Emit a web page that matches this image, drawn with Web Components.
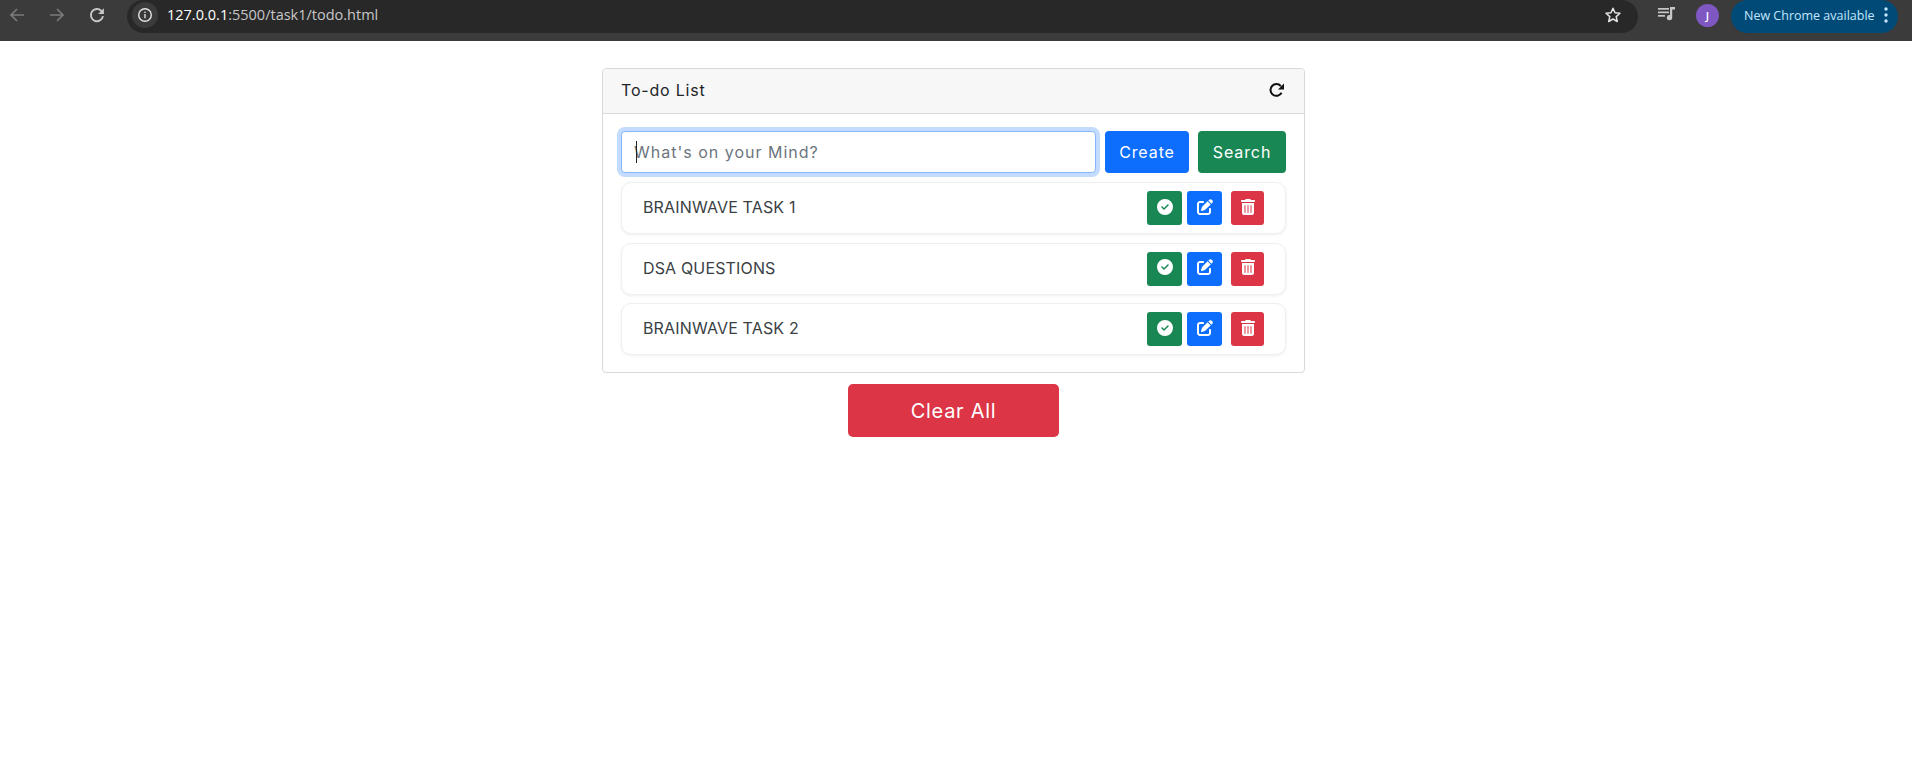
<!DOCTYPE html>
<html>
<head>
<meta charset="utf-8">
<title>To-do List</title>
<style>
  html, body { margin: 0; padding: 0; background: #fff; }
  body { font-family: Inter, "Liberation Sans", sans-serif; }
</style>
</head>
<body>
<browser-bar url-host="127.0.0.1" url-path=":5500/task1/todo.html"></browser-bar>
<todo-app>
  <todo-item>BRAINWAVE TASK 1</todo-item>
  <todo-item>DSA QUESTIONS</todo-item>
  <todo-item>BRAINWAVE TASK 2</todo-item>
</todo-app>

<script>
const ICONS = {
  check: '<svg viewBox="0 0 512 512" width="16" height="16"><path fill="currentColor" d="M256 512A256 256 0 1 0 256 0a256 256 0 1 0 0 512zM369 209L241 337c-9.4 9.4-24.6 9.4-33.9 0l-64-64c-9.4-9.4-9.4-24.6 0-33.9s24.6-9.4 33.9 0l47 47L335 175c9.4-9.4 24.6-9.4 33.9 0s9.4 24.6 0 33.9z"/></svg>',
  edit: '<svg viewBox="0 0 512 512" width="16" height="16"><path fill="currentColor" d="M471.6 21.7c-21.9-21.9-57.3-21.9-79.2 0L362.3 51.7l97.9 97.9 30.1-30.1c21.9-21.9 21.9-57.3 0-79.2L471.6 21.7zm-299.2 220c-6.1 6.1-10.8 13.6-13.5 21.9l-29.6 88.8c-2.9 8.6-.6 18.1 5.8 24.6s15.9 8.7 24.6 5.8l88.8-29.6c8.2-2.7 15.7-7.4 21.9-13.5L437.7 172.3 339.7 74.3 172.4 241.7zM96 64C43 64 0 107 0 160V416c0 53 43 96 96 96H352c53 0 96-43 96-96V320c0-17.7-14.3-32-32-32s-32 14.3-32 32v96c0 17.7-14.3 32-32 32H96c-17.7 0-32-14.3-32-32V160c0-17.7 14.3-32 32-32h96c17.7 0 32-14.3 32-32s-14.3-32-32-32H96z"/></svg>',
  trash: '<svg viewBox="0 0 448 512" width="14" height="16"><path fill="currentColor" d="M135.2 17.7C140.6 6.8 151.7 0 163.8 0H284.2c12.1 0 23.2 6.8 28.6 17.7L320 32h96c17.7 0 32 14.3 32 32s-14.3 32-32 32H32C14.3 96 0 81.7 0 64S14.3 32 32 32h96l7.2-14.3zM32 128H416V448c0 35.3-28.7 64-64 64H96c-35.3 0-64-28.7-64-64V128zm96 64c-8.8 0-16 7.2-16 16V432c0 8.8 7.2 16 16 16s16-7.2 16-16V208c0-8.8-7.2-16-16-16zm96 0c-8.8 0-16 7.2-16 16V432c0 8.8 7.2 16 16 16s16-7.2 16-16V208c0-8.8-7.2-16-16-16zm96 0c-8.8 0-16 7.2-16 16V432c0 8.8 7.2 16 16 16s16-7.2 16-16V208c0-8.8-7.2-16-16-16z"/></svg>',
  refresh: '<svg viewBox="0 0 16 16" width="16" height="16"><path d="M12.6 10.8A5.9 5.9 0 1 1 11.9 4.1" fill="none" stroke="currentColor" stroke-width="2"/><path d="M15 1.5V7.5H9z" fill="currentColor"/></svg>'
};

const barTemplate = document.createElement('template');
barTemplate.innerHTML = `
<style>
  :host {
    display: flex;
    align-items: flex-start;
    height: 41px;
    background: #3b3b3b;
    color: #c7c7c7;
    font-family: "Open Sans", "Noto Sans", sans-serif;
  }
  .nav { display: flex; width: 127px; height: 33px; box-sizing: border-box; padding-bottom: 4px; align-items: center; }
  .nav svg { display: block; margin-left: 8px; margin-right: 14px; }
  .nav .dim { color: #7b7b7b; }
  .url {
    flex: 1;
    height: 33px;
    box-sizing: border-box;
    background: #282828;
    border-radius: 17px;
    display: flex;
    align-items: center;
    padding: 0 16px 4px 5px;
    font-size: 14.5px;
  }
  .info {
    width: 26px; height: 26px; border-radius: 50%;
    background: #3b3b3b;
    display: flex; align-items: center; justify-content: center;
    margin-right: 9px;
  }
  .host { color: #fff; }
  .spacer { flex: 1; }
  .tools { display: flex; align-items: center; height: 33px; width: 274px; }
  .avatar {
    width: 23px; height: 23px; border-radius: 50%;
    background: #7e57c2; color: #fff;
    font-size: 11px; font-weight: 600;
    display: flex; align-items: center; justify-content: center;
    margin-left: 20px;
    margin-bottom: 3px;
  }
  .update {
    height: 33px; box-sizing: border-box; border-radius: 17px;
    background: #004a77; color: #c2e7ff;
    font-size: 12.5px;
    display: flex; align-items: center;
    padding: 0 10px 3px 13px;
    margin-left: 12px;
    white-space: nowrap;
  }
  .update svg { margin-left: 9px; }
</style>
<div class="nav">
  <svg class="dim" width="18" height="18" viewBox="0 0 18 18"><path d="M16 9H3M9 3L3 9l6 6" fill="none" stroke="currentColor" stroke-width="1.7"/></svg>
  <svg class="dim" width="18" height="18" viewBox="0 0 18 18"><path d="M2 9h13M9 3l6 6-6 6" fill="none" stroke="currentColor" stroke-width="1.7"/></svg>
  <svg width="18" height="18" viewBox="0 0 18 18"><path d="M15 10.2A6.1 6.1 0 1 1 13.2 4.7L14.6 6.2" fill="none" stroke="currentColor" stroke-width="1.9"/><path d="M15.9 2.2V8H10.1z" fill="currentColor"/></svg>
</div>
<div class="url">
  <span class="info"><svg width="16" height="16" viewBox="0 0 16 16"><circle cx="8" cy="8" r="6.3" fill="none" stroke="#e3e3e3" stroke-width="1.4"/><rect x="7.3" y="7" width="1.4" height="4.2" fill="#e3e3e3"/><rect x="7.3" y="4.6" width="1.4" height="1.4" fill="#e3e3e3"/></svg></span>
  <span><span class="host" id="host"></span><span id="path"></span></span>
  <span class="spacer"></span>
  <svg width="18" height="18" viewBox="0 0 18 18"><path d="M9 2.2l2 4.6 5 .5-3.8 3.3 1.1 4.9L9 13l-4.3 2.5 1.1-4.9L2 7.3l5-.5z" fill="none" stroke="#e3e3e3" stroke-width="1.5" stroke-linejoin="round"/></svg>
</div>
<div class="tools">
  <svg style="margin-left:20px;margin-bottom:5px" width="18" height="18" viewBox="0 0 18 18" fill="#c7c7c7"><rect x="0" y="3" width="11" height="1.7"/><rect x="0" y="6.5" width="11" height="1.7"/><rect x="0" y="10" width="7" height="1.7"/><path d="M12 2h5v2.4h-2.8v8.2a2.7 2.7 0 1 1-2.2-2.6z"/></svg>
  <span class="avatar">J</span>
  <span class="update">New Chrome available
    <svg width="4" height="18" viewBox="0 0 4 18" fill="#c2e7ff"><circle cx="2" cy="3" r="1.7"/><circle cx="2" cy="9" r="1.7"/><circle cx="2" cy="15" r="1.7"/></svg>
  </span>
</div>
`;

class BrowserBar extends HTMLElement {
  constructor() {
    super();
    this.attachShadow({mode: "open"});
    this.shadowRoot.appendChild(barTemplate.content.cloneNode(true));
  }
  connectedCallback() {
    this.shadowRoot.getElementById("host").textContent = this.getAttribute("url-host");
    this.shadowRoot.getElementById("path").textContent = this.getAttribute("url-path");
  }
}
customElements.define("browser-bar", BrowserBar);

const itemTemplate = document.createElement('template');
itemTemplate.innerHTML = `
<style>
  :host {
    display: flex;
    align-items: center;
    height: 52px;
    box-sizing: border-box;
    padding: 0 21px 0 21px;
    border: 1px solid #f0f0f1;
    border-radius: 10px;
    box-shadow: 0 1px 3px rgba(0, 0, 0, .07);
    color: #3a3f44;
    font-size: 16px;
    background: #fff;
  }
  .name { flex: 1; letter-spacing: .15px; padding-bottom: 2px; }
  .actions { display: flex; }
  button {
    border: 0; padding: 0; height: 34px; border-radius: 3px;
    color: #fff; display: flex; align-items: center; justify-content: center;
  }
  .done { width: 35px; background: #198754; }
  .edit { width: 35px; background: #0d6efd; margin-left: 5px; }
  .del { width: 33px; background: #dc3545; margin-left: 9px; }
  button svg { margin-bottom: 3px; }
</style>
<span class="name"><slot></slot></span>
<div class="actions">
  <button class="done">${ICONS.check}</button>
  <button class="edit">${ICONS.edit}</button>
  <button class="del">${ICONS.trash}</button>
</div>
`;

class TodoItem extends HTMLElement {
  constructor() {
    super();
    this.attachShadow({mode: "open"});
    this.shadowRoot.appendChild(itemTemplate.content.cloneNode(true));
  }
}
customElements.define("todo-item", TodoItem);

const appTemplate = document.createElement('template');
appTemplate.innerHTML = `
<style>
  :host {
    display: flex;
    flex-direction: column;
    align-items: center;
    padding: 27px 5px 0 0;
    font-family: Inter, "Liberation Sans", sans-serif;
  }
  .card {
    width: 703px;
    box-sizing: border-box;
    border: 1px solid #d9d9d9;
    border-radius: 4px;
    color: #212529;
  }
  .head {
    display: flex; align-items: center; justify-content: space-between;
    height: 45px;
    box-sizing: border-box;
    padding: 0 18px 3px;
    background: #f7f7f7;
    border-bottom: 1px solid #d9d9d9;
    border-radius: 4px 4px 0 0;
    font-size: 16px;
    letter-spacing: .8px;
  }
  .body { padding: 17px 18px 17px; display: flex; flex-direction: column; gap: 8.5px; }
  .form { display: flex; height: 42px; margin-bottom: .5px; }
  .field {
    flex: 1;
    position: relative;
  }
  input {
    width: 100%; height: 100%; box-sizing: border-box;
    border: 1px solid #86b7fe;
    border-radius: 4px;
    box-shadow: 0 0 0 4px #c2dbfe;
    outline: 0;
    padding: 0 12px;
    font: 16px Inter, "Liberation Sans", sans-serif;
    letter-spacing: 1px;
  }
  input::placeholder { color: #6c757d; opacity: 1; }
  .caret { position: absolute; left: 15px; top: 10px; width: 1px; height: 22px; background: #212529; }
  button.btn {
    border: 0; border-radius: 4px; color: #fff;
    font: 16px Inter, "Liberation Sans", sans-serif;
    letter-spacing: .9px;
    padding: 0;
  }
  .create { width: 84px; margin-left: 9px; background: #0d6efd; }
  .search { width: 88px; margin-left: 9px; background: #198754; }
  .clear {
    margin-top: 11px;
    width: 211px; height: 53px;
    border: 0; border-radius: 5px;
    background: #dc3545; color: #fff;
    font: 20px Inter, "Liberation Sans", sans-serif;
    letter-spacing: .7px;
  }
  .refresh { display: flex; color: #111; margin-right: 1px; }
</style>
<div class="card">
  <div class="head"><span>To-do List</span><span class="refresh">${ICONS.refresh}</span></div>
  <div class="body">
    <div class="form">
      <div class="field"><input placeholder="What's on your Mind?"><span class="caret"></span></div>
      <button class="btn create">Create</button>
      <button class="btn search">Search</button>
    </div>
    <slot></slot>
  </div>
</div>
<button class="clear">Clear All</button>
`;

class TodoApp extends HTMLElement {
  constructor() {
    super();
    this.attachShadow({mode: "open"});
    this.shadowRoot.appendChild(appTemplate.content.cloneNode(true));
  }
}
customElements.define("todo-app", TodoApp);
</script>
</body>
</html>
